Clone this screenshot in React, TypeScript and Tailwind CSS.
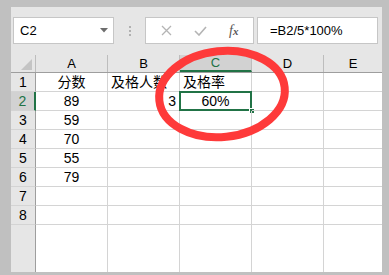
const cols = ["A", "B", "C", "D", "E"];

type Cell = { text?: string; align?: "left" | "center" | "right"; selected?: boolean };

const rows: Cell[][] = [
  [{ text: "分数", align: "center" }, { text: "及格人数", align: "left" }, { text: "及格率", align: "left" }, {}, {}],
  [{ text: "89", align: "center" }, { text: "3", align: "right" }, { text: "60%", align: "center", selected: true }, {}, {}],
  [{ text: "59", align: "center" }, {}, {}, {}, {}],
  [{ text: "70", align: "center" }, {}, {}, {}, {}],
  [{ text: "55", align: "center" }, {}, {}, {}, {}],
  [{ text: "79", align: "center" }, {}, {}, {}, {}],
  [{}, {}, {}, {}, {}],
  [{}, {}, {}, {}, {}],
];

function DataCell({ cell, last }: { cell: Cell; last: boolean }) {
  const align =
    cell.align === "right"
      ? "justify-end pr-[3px]"
      : cell.align === "left"
      ? "justify-start pl-[3px]"
      : "justify-center";
  return (
    <div
      className={
        "relative h-full flex items-center border-b border-[#d4d4d4] " +
        (last ? "flex-1 " : "w-[72px] border-r ") +
        align
      }
    >
      {cell.text}
      {cell.selected && (
        <>
          <div className="absolute -left-px -top-px right-[-1px] bottom-[-1px] border-2 border-[#217346]" />
          <div className="absolute right-[-4px] bottom-[-4px] w-[6px] h-[6px] bg-[#217346] border border-white" />
        </>
      )}
    </div>
  );
}

export default function App() {
  return (
    <div
      className="relative w-[389px] h-[275px] overflow-hidden bg-[#c0c0c0] pl-[11px] pt-[7px] pr-[7px] pb-[3px] text-black"
      style={{ fontFamily: '"Liberation Sans", "Noto Sans CJK SC", sans-serif' }}
    >
      <div className="flex flex-col h-full bg-white">
        {/* formula bar */}
        <div className="h-[48px] bg-[#e6e6e6] flex items-start pt-[10px] pl-[2px]">
          <div className="w-[101px] h-[27px] bg-white border border-[#c6c6c6] flex items-center justify-between pl-[6px] pr-[5px] text-[13px]">
            <span>C2</span>
            <svg width="8" height="5" viewBox="0 0 8 5">
              <path d="M0 0h8L4 4.5z" fill="#6d6d6d" />
            </svg>
          </div>
          <div className="w-[31px] h-[27px] flex flex-col items-center justify-center gap-[2px]">
            <div className="w-[2px] h-[2px] bg-[#b0b0b0]" />
            <div className="w-[2px] h-[2px] bg-[#b0b0b0]" />
            <div className="w-[2px] h-[2px] bg-[#b0b0b0]" />
          </div>
          <div className="w-[109px] h-[27px] bg-white border border-[#c6c6c6] flex items-center pl-[15px] gap-[22px]">
            <svg width="11" height="11" viewBox="0 0 11 11">
              <path d="M1 1l9 9M10 1l-9 9" stroke="#b4b4b4" strokeWidth="1.3" fill="none" />
            </svg>
            <svg width="13" height="10" viewBox="0 0 13 10">
              <path d="M1 5l4 4 7-8" stroke="#b4b4b4" strokeWidth="1.6" fill="none" />
            </svg>
            <span
              className="italic text-[14px] text-[#555]"
              style={{ fontFamily: '"Liberation Serif", serif' }}
            >
              f<span className="text-[11px] font-bold">x</span>
            </span>
          </div>
          <div className="ml-[3px] w-[121px] h-[27px] bg-white border border-[#c6c6c6] flex items-center pl-[12px] text-[13px]">
            =B2/5*100%
          </div>
        </div>

        {/* column headers */}
        <div className="h-[18px] flex bg-[#e6e6e6] border-b border-[#9e9e9e] text-[13px]">
          <div className="w-[25px] h-full border-r border-[#bdbdbd] flex items-end justify-end pr-[3px] pb-[2px]">
            <svg width="11" height="11" viewBox="0 0 11 11">
              <path d="M11 0v11H0z" fill="#c4c4c4" />
            </svg>
          </div>
          {cols.map((c, i) =>
            c === "C" ? (
              <div
                key={c}
                className="w-[72px] h-full border-r border-[#bdbdbd] bg-[#d2d2d2] border-b-2 border-b-[#217346] text-[#217346] flex items-center justify-center"
              >
                {c}
              </div>
            ) : (
              <div
                key={c}
                className={
                  "h-full flex items-center justify-center " +
                  (i === cols.length - 1 ? "flex-1" : "w-[72px] border-r border-[#bdbdbd]")
                }
              >
                {c}
              </div>
            )
          )}
        </div>

        {/* rows */}
        {rows.map((r, ri) => (
          <div key={ri} className="h-[19px] flex text-[14px]">
            <div
              className={
                "w-[25px] h-full border-b border-[#d4d4d4] flex items-center justify-center " +
                (ri === 1
                  ? "bg-[#d2d2d2] border-r-2 border-r-[#217346] text-[#217346]"
                  : "bg-[#e6e6e6] border-r border-r-[#9e9e9e]")
              }
            >
              {ri + 1}
            </div>
            {r.map((cell, ci) => (
              <DataCell key={ci} cell={cell} last={ci === r.length - 1} />
            ))}
          </div>
        ))}

        <div className="flex-1 flex">
          <div className="w-[25px] h-full bg-[#e6e6e6] border-r border-[#9e9e9e]" />
          {cols.map((c, i) => (
            <div
              key={c}
              className={i === cols.length - 1 ? "flex-1" : "w-[72px] border-r border-[#d4d4d4]"}
            />
          ))}
        </div>
      </div>

      {/* hand-drawn highlight */}
      <svg className="absolute inset-0 pointer-events-none" width="389" height="275">
        <ellipse
          cx="222"
          cy="94"
          rx="63"
          ry="43"
          transform="rotate(-6 222 94)"
          fill="none"
          stroke="#fe3a3a"
          strokeWidth="8"
        />
      </svg>
    </div>
  );
}
